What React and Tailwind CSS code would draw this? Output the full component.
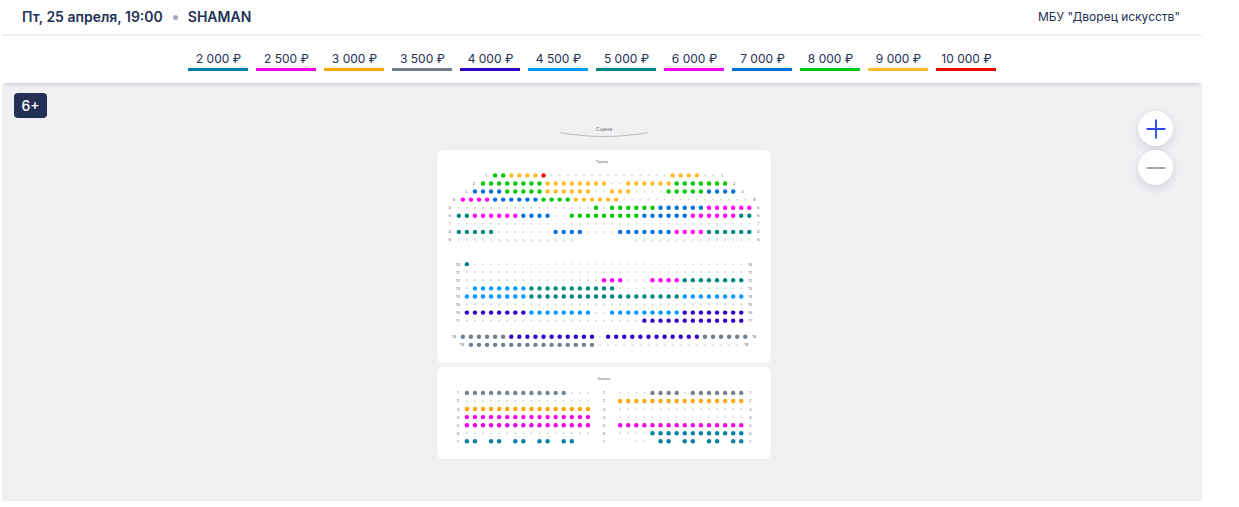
import { Minus, Plus } from 'lucide-react';

const PRICES = [
  { label: '2 000 ₽', bar: 'bg-[#007ea8]' },
  { label: '2 500 ₽', bar: 'bg-[#f200e6]' },
  { label: '3 000 ₽', bar: 'bg-[#ffa500]' },
  { label: '3 500 ₽', bar: 'bg-[#708090]' },
  { label: '4 000 ₽', bar: 'bg-[#3300c4]' },
  { label: '4 500 ₽', bar: 'bg-[#0099ff]' },
  { label: '5 000 ₽', bar: 'bg-[#008580]' },
  { label: '6 000 ₽', bar: 'bg-[#ff00f2]' },
  { label: '7 000 ₽', bar: 'bg-[#006fd6]' },
  { label: '8 000 ₽', bar: 'bg-[#00c808]' },
  { label: '9 000 ₽', bar: 'bg-[#ffbb2b]' },
  { label: '10 000 ₽', bar: 'bg-[#f20000]' },
];

// seat code -> price colour
const SEAT_FILL = {
  K: 'fill-[#007ea8]',
  P: 'fill-[#f200e6]',
  O: 'fill-[#ffa500]',
  S: 'fill-[#708090]',
  I: 'fill-[#3300c4]',
  L: 'fill-[#0099ff]',
  T: 'fill-[#008580]',
  M: 'fill-[#ff00f2]',
  B: 'fill-[#006fd6]',
  G: 'fill-[#00c808]',
  Y: 'fill-[#ffbb2b]',
  R: 'fill-[#f20000]',
};

// Each row: name, line on the grid, first column, and seats as runs.
// "." is a sold seat, "_" is an aisle.
const PARTER = [
  { n: 1, line: 0, from: 4.5, seats: 'G2 Y4 R1 .15 Y4 .2' },
  { n: 2, line: 1, from: 3, seats: 'G8 Y8 .2 Y6 G7' },
  { n: 3, line: 2, from: 2, seats: 'B4 G5 Y6 .2 Y3 .4 G5 B4' },
  { n: 4, line: 3, from: 0.5, seats: 'M4 B6 G4 Y6 .16' },
  { n: 5, line: 4, from: 0, seats: '.17 G1 .1 G6 B6 M6' },
  { n: 6, line: 5, from: 0, seats: 'T2 M6 B4 .2 G9 B6 M6 T2' },
  { n: 7, line: 6, from: 0, seats: '.37' },
  { n: 8, line: 7, from: 0, seats: 'T5 .7 B4 .4 B7 M4 T6' },
  { n: 9, line: 8, from: 0, seats: '.15 _7 .15' },
  { n: 10, line: 11, from: 1, seats: 'T1 .34' },
  { n: 11, line: 12, from: 1, seats: '.35' },
  { n: 12, line: 13, from: 1, seats: '.17 M3 .3 M4 T8' },
  { n: 13, line: 14, from: 1, seats: '.1 L7 T11 .16' },
  { n: 14, line: 15, from: 1, seats: 'L8 T19 L8' },
  { n: 15, line: 16, from: 1, seats: '.35' },
  { n: 16, line: 17, from: 1, seats: 'I8 L8 .2 L9 I8' },
  { n: 17, line: 18, from: 1, seats: '.22 I13' },
  { n: 18, line: 20, from: 0.5, seats: 'S6 I11 .1 I12 S6' },
  { n: 19, line: 21, from: 1.5, seats: 'S16 .18' },
];

const BALCONY = [
  { n: 1, line: 0, from: 1, seats: 'S13 .3 _3 .4 S4 .1 S7' },
  { n: 2, line: 1, from: 1, seats: '.16 _3 O16' },
  { n: 3, line: 2, from: 1, seats: 'O16 _3 .16' },
  { n: 4, line: 3, from: 1, seats: 'P16 _3 .16' },
  { n: 5, line: 4, from: 1, seats: 'P16 _3 P16' },
  { n: 6, line: 5, from: 1, seats: '.16 _3 .4 K12' },
  { n: 7, line: 6, from: 1, seats: 'K2 _1 K2 _1 K2 _1 K2 _1 K2 _7 .2 _1 K2 _1 K2 _1 K2 _1 K2' },
];

const PITCH = 8.07;
const LEFT = 21.8;

function expand(runs) {
  return runs.split(' ').map((run) => run[0].repeat(Number(run.slice(1)))).join('');
}

function Label({ x, y, children }) {
  return (
    <text x={x} y={y + 1.5} textAnchor="middle" fontSize="4" className="fill-[#666666]">
      {children}
    </text>
  );
}

function Row({ row, top, middle }) {
  const seats = expand(row.seats);
  const y = top + row.line * PITCH;
  const x = (i) => LEFT + (row.from + i) * PITCH;
  return (
    <g>
      <Label x={x(0) - 9} y={y}>{row.n}</Label>
      {[...seats].map((code, i) => {
        if (code === '_') return null;
        if (code === '.') {
          return <circle key={i} cx={x(i)} cy={y} r="0.95" className="fill-[#d4d4d4]" />;
        }
        return <circle key={i} cx={x(i)} cy={y} r="2.2" className={SEAT_FILL[code]} />;
      })}
      {middle && <Label x={167} y={y}>{row.n}</Label>}
      <Label x={x(seats.length - 1) + 9} y={y}>{row.n}</Label>
    </g>
  );
}

function Section({ title, titleX, rows, top, height, middle }) {
  return (
    <section className="overflow-hidden rounded-md bg-white">
      <svg viewBox={`0 0 334 ${height}`} className="block w-full" role="img" aria-label={title}>
        <text x={titleX} y="13.2" textAnchor="middle" fontSize="3.4" className="fill-[#666666]">{title}</text>
        {rows.map((row) => (
          <Row key={row.n} row={row} top={top} middle={middle} />
        ))}
      </svg>
    </section>
  );
}

function Stage() {
  return (
    <svg viewBox="0 0 90 14" className="block h-[14px] w-[90px]" role="img" aria-label="Сцена">
      <text x="45" y="7.3" textAnchor="middle" fontSize="5.4" className="fill-[#777777]">Сцена</text>
      <path d="M0.5 8.5Q45 16.5 89.5 8.5" fill="none" stroke="#bcbcbc" strokeWidth="1.1" />
    </svg>
  );
}

function ZoomButton({ label, children }) {
  return (
    <button
      type="button"
      aria-label={label}
      className="flex size-[35px] items-center justify-center rounded-full bg-white shadow-[0_3px_8px_rgba(35,48,84,0.16)]"
    >
      {children}
    </button>
  );
}

export default function App() {
  return (
    <div className="mr-[37px] ml-[2px] bg-white font-['Inter',sans-serif] text-[#233054]">
      <header className="flex h-9 items-center justify-between border-b-2 border-[#edf1f8] pr-[22px] pl-5">
        <h1 className="flex items-center text-sm font-semibold">
          <span>Пт, 25 апреля, 19:00</span>
          <span className="mx-[10px] size-[5px] rounded-full bg-[#a2abbd]" />
          <span>SHAMAN</span>
        </h1>
        <p className="pb-px text-xs">МБУ "Дворец искусств"</p>
      </header>

      <div className="relative z-10 flex h-[47px] justify-center gap-2 pt-[15px] pr-5 shadow-[0_4px_4px_-3px_rgba(35,48,84,0.25)]">
        {PRICES.map(({ label, bar }) => (
          <button key={label} type="button" className="flex w-[60px] flex-col items-center text-xs">
            <span className="h-[17px] pl-px leading-4 whitespace-nowrap">{label}</span>
            <span className={`h-[3px] w-full ${bar}`} />
          </button>
        ))}
      </div>

      <main className="relative bg-[#f0f0f3] pt-[41px] pb-[42px]">
        <span className="absolute top-[10px] left-3 flex h-[25px] w-[33px] items-center justify-center rounded bg-[#233054] text-sm font-medium text-white">
          6+
        </span>

        <div className="flex flex-col items-center pl-1">
          <Stage />
          <div className="mt-3 flex w-[334px] flex-col gap-1">
            <Section title="Партер" titleX={165} rows={PARTER} top={25.4} height={213} />
            <Section title="Балкон" titleX={167} rows={BALCONY} top={25.9} height={92} middle />
          </div>
        </div>

        <div className="absolute top-7 right-[29px] flex flex-col gap-1">
          <ZoomButton label="Увеличить">
            <Plus size={30} strokeWidth={1.5} className="text-[#2f4df5]" />
          </ZoomButton>
          <ZoomButton label="Уменьшить">
            <Minus size={30} strokeWidth={1.5} className="text-[#a2abbd]" />
          </ZoomButton>
        </div>
      </main>
    </div>
  );
}
